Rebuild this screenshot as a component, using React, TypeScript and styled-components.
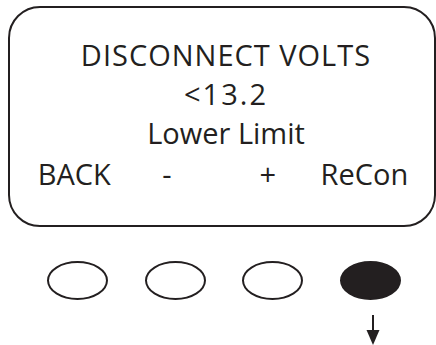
import React from 'react';
import styled, { createGlobalStyle } from 'styled-components';

const GlobalStyle = createGlobalStyle`
  html, body {
    margin: 0;
    padding: 0;
    background: #ffffff;
  }
  body {
    width: 436px;
    height: 345px;
    overflow: hidden;
    font-family: 'Open Sans', 'Liberation Sans', sans-serif;
    color: #231f20;
  }
`;

const Wrapper = styled.div`
  width: 436px;
  height: 345px;
  padding-top: 6px;
  box-sizing: border-box;
`;

const Screen = styled.div`
  margin-left: 8px;
  width: 428px;
  height: 221px;
  box-sizing: border-box;
  border: 2.5px solid #231f20;
  border-radius: 32px;
  padding-top: 27px;
  display: flex;
  flex-direction: column;
  align-items: stretch;
`;

const Line = styled.div<{ $spacing?: number }>`
  padding-left: 8px;
  text-align: center;
  font-size: 29px;
  line-height: 39px;
  letter-spacing: ${({ $spacing }) => $spacing ?? 0}px;
  white-space: nowrap;
`;

const SoftKeys = styled.div`
  display: grid;
  grid-template-columns: repeat(4, 96.7px);
  margin-left: 16px;
  margin-top: 2px;
  font-size: 29px;
  line-height: 39px;
`;

const KeyLabel = styled.div<{ $shift?: number }>`
  text-align: center;
  white-space: nowrap;
  transform: translateX(${({ $shift }) => $shift ?? 0}px);
`;

const ButtonRow = styled.div`
  display: flex;
  gap: 36.5px;
  margin-top: 34px;
  margin-left: 47px;
`;

const Button = styled.div<{ $active?: boolean }>`
  width: 61px;
  height: 39px;
  box-sizing: border-box;
  border-radius: 50%;
  border: 2.5px solid #231f20;
  background: ${({ $active }) => ($active ? '#231f20' : 'transparent')};
`;

const ArrowBox = styled.div`
  margin-top: 15px;
  margin-left: 366px;
  width: 14px;
  height: 30px;
`;

const labels = [
  { text: 'BACK', shift: 0 },
  { text: '-', shift: -4 },
  { text: '+', shift: 0 },
  { text: 'ReCon', shift: 0 },
];

export default function App() {
  return (
    <>
      <GlobalStyle />
      <Wrapper>
        <Screen>
          <Line $spacing={1}>DISCONNECT VOLTS</Line>
          <Line $spacing={2}>&lt;13.2</Line>
          <Line>Lower Limit</Line>
          <SoftKeys>
            {labels.map((l) => (
              <KeyLabel key={l.text} $shift={l.shift}>
                {l.text}
              </KeyLabel>
            ))}
          </SoftKeys>
        </Screen>
        <ButtonRow>
          {labels.map((l, i) => (
            <Button key={l.text} $active={i === 3} />
          ))}
        </ButtonRow>
        <ArrowBox>
          <svg width="14" height="30" viewBox="0 0 14 30">
            <line x1="7" y1="0" x2="7" y2="18" stroke="#231f20" strokeWidth="2" />
            <polygon points="0.5,15 13.5,15 7,30" fill="#231f20" />
          </svg>
        </ArrowBox>
      </Wrapper>
    </>
  );
}
